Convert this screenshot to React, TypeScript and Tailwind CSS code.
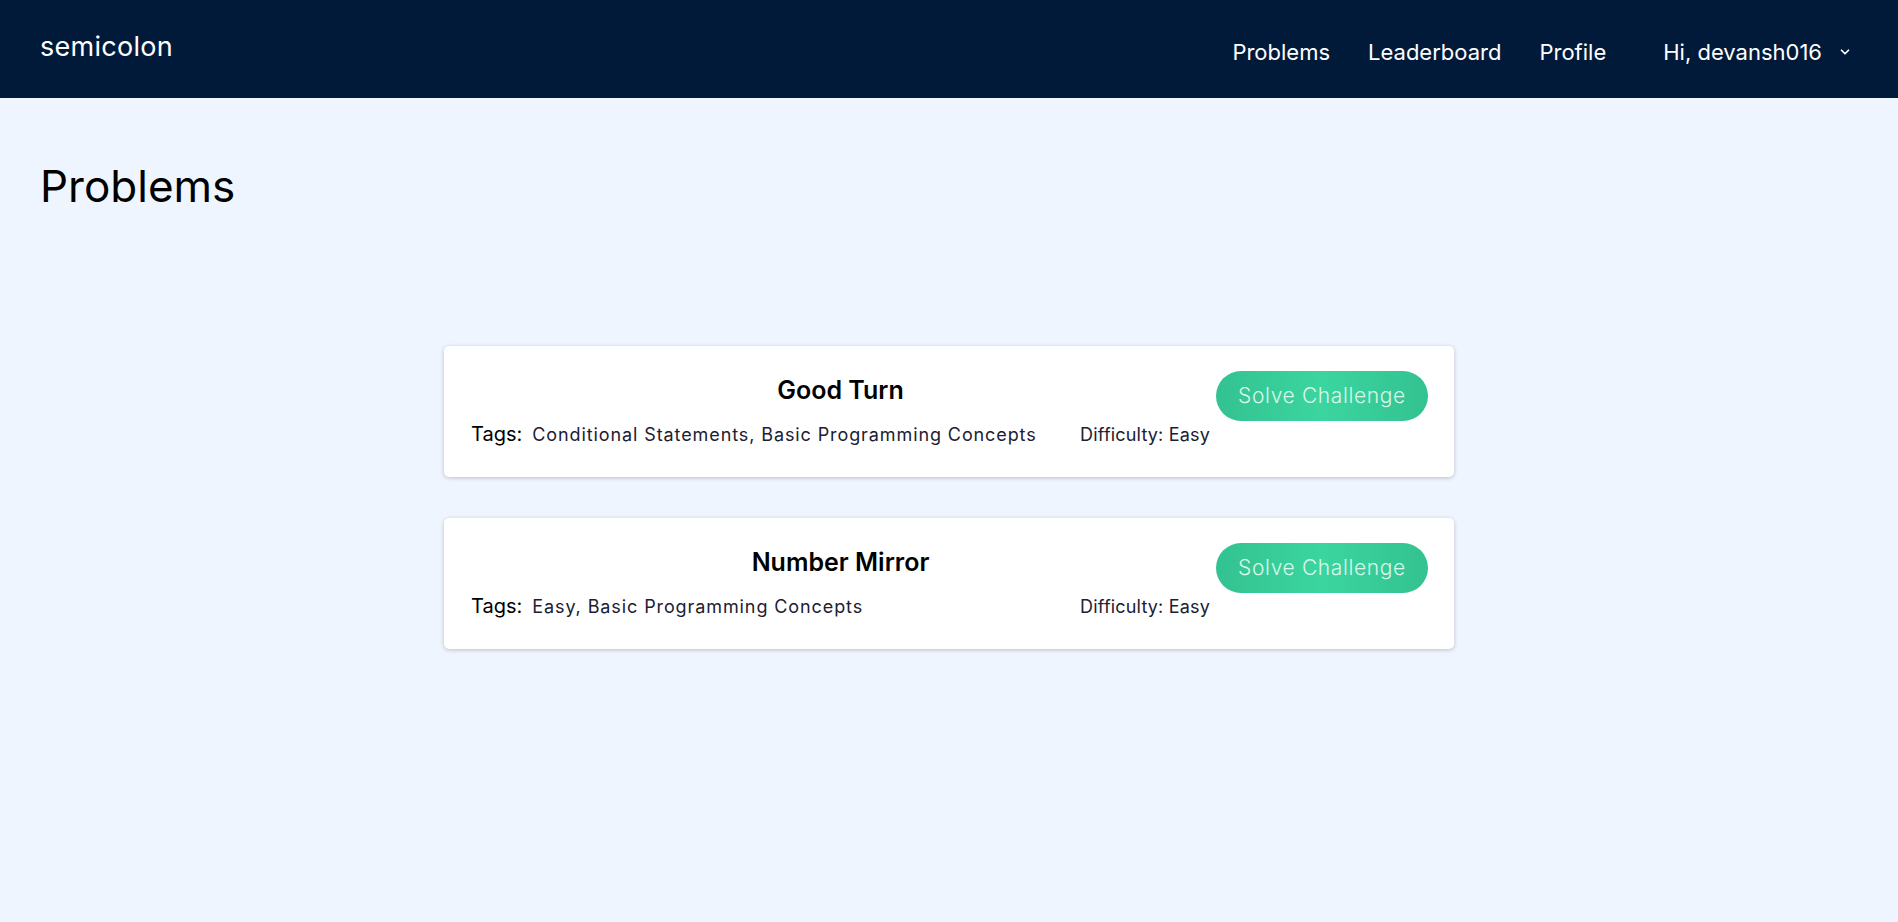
import { ChevronDown } from "lucide-react";

const problems = [
  { title: "Good Turn", tags: "Conditional Statements, Basic Programming Concepts", difficulty: "Easy" },
  { title: "Number Mirror", tags: "Easy, Basic Programming Concepts", difficulty: "Easy" },
];

function Navbar() {
  return (
    <nav className="flex h-[98px] items-center justify-between bg-[#011a3a] pl-10 pr-[46px] text-white">
      <span className="-mt-[3px] text-[27px] tracking-[0.01em]">semicolon</span>
      <div className="mt-[6px] flex items-center text-[22px]">
        <a className="mr-[38px]">Problems</a>
        <a className="mr-[38px]">Leaderboard</a>
        <a className="mr-[57px]">Profile</a>
        <button className="flex items-center gap-[16px]">
          <span>Hi, devansh016</span>
          <ChevronDown size={14} strokeWidth={3} />
        </button>
      </div>
    </nav>
  );
}

function ProblemCard({ title, tags, difficulty }: { title: string; tags: string; difficulty: string }) {
  return (
    <div className="flex h-[131px] w-[1010px] items-start gap-[6px] rounded-[5px] bg-white pl-[27px] pr-[26px] pt-[25px] shadow-[0_1px_4px_rgba(0,0,0,0.22)]">
      <div className="flex flex-1 flex-col pt-[1px]">
        <h2 className="text-center text-[25px] font-semibold text-black">{title}</h2>
        <div className="mt-[9px] flex items-baseline justify-between">
          <div className="flex items-baseline">
            <span className="text-[20px] text-black">Tags:</span>
            <span className="ml-[10px] text-[18px] tracking-[0.05em] text-[#1c2033]">{tags}</span>
          </div>
          <span className="text-[18px] tracking-[0.01em] text-[#1c2033]">Difficulty: {difficulty}</span>
        </div>
      </div>
      <button className="h-[50px] w-[212px] rounded-full bg-[linear-gradient(90deg,#33c291_0%,#3bd59f_50%,#33c291_100%)] text-[21px] font-light tracking-[0.03em] text-[#d9f8ea]">
        Solve Challenge
      </button>
    </div>
  );
}

export default function App() {
  return (
    <div className="min-h-[922px] bg-[#eff5fe] font-['Inter',sans-serif]">
      <Navbar />
      <main className="px-10 pt-[66px]">
        <h1 className="text-[44px] font-normal leading-none text-black">Problems</h1>
        <div className="mt-[138px] flex flex-col items-center gap-[41px]">
          {problems.map((p) => (
            <ProblemCard key={p.title} {...p} />
          ))}
        </div>
      </main>
    </div>
  );
}
